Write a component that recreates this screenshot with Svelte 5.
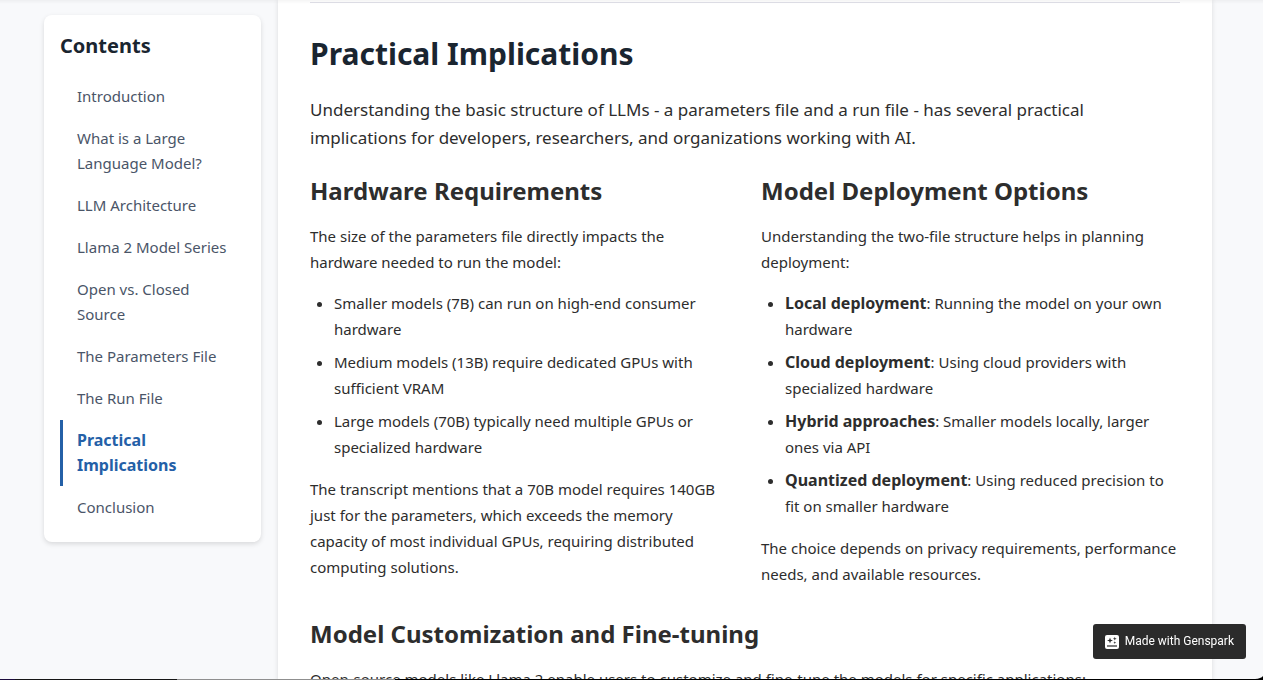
<script>
  const contents = [
    'Introduction',
    'What is a Large Language Model?',
    'LLM Architecture',
    'Llama 2 Model Series',
    'Open vs. Closed Source',
    'The Parameters File',
    'The Run File',
    'Practical Implications',
    'Conclusion'
  ];
  const active = 'Practical Implications';

  const hardware = [
    'Smaller models (7B) can run on high-end consumer hardware',
    'Medium models (13B) require dedicated GPUs with sufficient VRAM',
    'Large models (70B) typically need multiple GPUs or specialized hardware'
  ];

  const deployment = [
    ['Local deployment', 'Running the model on your own hardware'],
    ['Cloud deployment', 'Using cloud providers with specialized hardware'],
    ['Hybrid approaches', 'Smaller models locally, larger ones via API'],
    ['Quantized deployment', 'Using reduced precision to fit on smaller hardware']
  ];
</script>

<div class="page">
  <aside>
    <nav class="toc" aria-labelledby="toc-title">
      <h2 id="toc-title">Contents</h2>
      <ul>
        {#each contents as item}
          <li><a href="#top" class:active={item === active}>{item}</a></li>
        {/each}
      </ul>
    </nav>
  </aside>

  <main>
    <hr />
    <h2>Practical Implications</h2>
    <p class="lead">
      Understanding the basic structure of LLMs - a parameters file and a run file - has several
      practical implications for developers, researchers, and organizations working with AI.
    </p>

    <div class="columns">
      <section>
        <h3>Hardware Requirements</h3>
        <p>The size of the parameters file directly impacts the hardware needed to run the model:</p>
        <ul>
          {#each hardware as item}
            <li>{item}</li>
          {/each}
        </ul>
        <p>
          The transcript mentions that a 70B model requires 140GB just for the parameters, which
          exceeds the memory capacity of most individual GPUs, requiring distributed computing
          solutions.
        </p>
      </section>
      <section>
        <h3>Model Deployment Options</h3>
        <p>Understanding the two-file structure helps in planning deployment:</p>
        <ul>
          {#each deployment as [name, text]}
            <li><strong>{name}</strong>: {text}</li>
          {/each}
        </ul>
        <p>The choice depends on privacy requirements, performance needs, and available resources.</p>
      </section>
    </div>

    <h3>Model Customization and Fine-tuning</h3>
    <p>Open-source models like Llama 2 enable users to customize and fine-tune the models for specific applications:</p>
  </main>
</div>

<div class="top-shade"></div>
<div class="bottom-edge"></div>
<a class="badge" href="#top">
  <svg width="14" height="14" viewBox="0 0 14 14" aria-hidden="true">
    <rect width="14" height="14" rx="2" fill="#fff" />
    <path d="M5 2.5 5.8 4.7 8 5.5 5.8 6.3 5 8.5 4.2 6.3 2 5.5 4.2 4.7Z" fill="#2b2b2b" />
    <path d="M9.8 1.8 10.3 3.2 11.7 3.7 10.3 4.2 9.8 5.6 9.3 4.2 7.9 3.7 9.3 3.2Z" fill="#2b2b2b" />
    <path d="M9.8 6.2 10.2 7.2 11.2 7.6 10.2 8 9.8 9 9.4 8 8.4 7.6 9.4 7.2Z" fill="#2b2b2b" />
    <path d="M2 11H12" stroke="#2b2b2b" stroke-width="1.2" />
  </svg>
  Made with Genspark
</a>
<svg class="corner" width="8" height="3" viewBox="0 0 8 3" aria-hidden="true">
  <path d="M0 3Q6 2.5 8 0V3Z" />
</svg>

<style>
  :global(body) {
    margin: 0;
    background: #f8f9fb;
  }
  .page {
    box-sizing: border-box;
    height: 100vh;
    overflow: hidden;
    display: grid;
    grid-template-columns: 217px 1fr;
    gap: 17px;
    padding: 0 51px 0 44px;
    color: #2d2d2d;
    font: 15px/26px 'Noto Sans', 'Open Sans', sans-serif;
  }
  h2,
  h3,
  p,
  ul {
    margin: 0;
  }
  aside {
    padding-top: 15px;
  }
  .toc {
    padding: 16px 16px 14px;
    background: #fff;
    border-radius: 8px;
    box-shadow: 0 2px 5px rgba(0, 0, 0, 0.13);
  }
  .toc h2 {
    color: #1a2530;
    font-size: 20px;
    line-height: 30px;
    margin-bottom: 15px;
  }
  .toc ul {
    display: flex;
    flex-direction: column;
    gap: 1px;
    padding: 0;
    list-style: none;
  }
  .toc a {
    display: block;
    padding: 8px 14px;
    border-left: 3px solid transparent;
    color: #4a5568;
    line-height: 25px;
    text-decoration: none;
  }
  .toc a.active {
    border-color: #2460a7;
    color: #2460a7;
    font-size: 16px;
    font-weight: 700;
  }
  main {
    min-height: 100vh;
    padding: 2px 32px 0;
    background: #fff;
    box-shadow: 0 0 5px rgba(0, 0, 0, 0.12);
  }
  hr {
    height: 1px;
    margin: 0 0 31px;
    border: 0;
    background: #e0e0e8;
  }
  main h2 {
    margin-bottom: 22px;
    color: #1a2530;
    font-size: 30px;
    line-height: 40px;
  }
  .lead {
    margin-bottom: 23px;
    font-size: 17px;
    line-height: 28px;
  }
  h3 {
    margin-bottom: 16px;
    font-size: 24px;
    line-height: 32px;
  }
  .columns {
    display: grid;
    grid-template-columns: 1fr 1fr;
    gap: 32px;
    margin-bottom: 31px;
  }
  main ul {
    display: flex;
    flex-direction: column;
    gap: 7px;
    margin: 15px 0 16px;
    padding-left: 24px;
  }
  strong {
    font-size: 16px;
    line-height: 16px;
  }
  .top-shade {
    position: fixed;
    inset: 0 0 auto;
    height: 4px;
    background: linear-gradient(rgba(0, 0, 0, 0.04), transparent);
  }
  .bottom-edge {
    position: fixed;
    inset: auto 0 0;
    height: 1px;
    background: linear-gradient(90deg, #1c0b3c 15px, #151515 15px 177px, #8f8f8f 177px 395px, #000 395px);
  }
  .corner {
    position: fixed;
    right: 0;
    bottom: 1px;
  }
  .badge {
    position: fixed;
    right: 17px;
    bottom: 21px;
    display: flex;
    align-items: center;
    gap: 6px;
    padding: 0 12px;
    border-radius: 3px;
    background: #2b2b2b;
    color: #fff;
    font: 12px/35px Roboto, 'Noto Sans', sans-serif;
    text-decoration: none;
  }
</style>
